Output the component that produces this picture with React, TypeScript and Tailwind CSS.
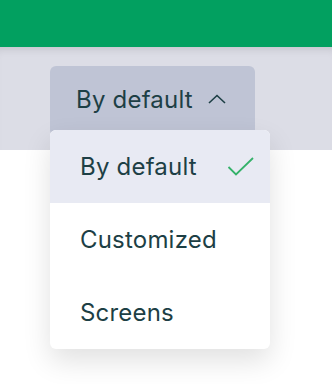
import React from 'react'

const options = ['By default', 'Customized', 'Screens']

const App: React.FC = () => {
  const selected = 'By default'
  return (
    <div className="w-[332px] h-[384px] bg-white overflow-hidden" style={{ fontFamily: 'Inter, "Noto Sans", sans-serif' }}>
      <div className="h-[47px] bg-[#02a060]" />
      <div className="relative h-[103px] bg-[#dcdde6] shadow-[inset_0_8px_8px_-6px_rgba(0,0,0,0.12)]">
        <div className="absolute left-[50px] top-[19px] w-[205px] h-[70px] rounded-md bg-[#bfc4d5] flex items-start pt-[18px] pl-[26px] gap-[15px] text-[#1d3f45]">
          <span className="text-[24px] leading-[32px] tracking-[0.2px]">By default</span>
          <svg width="18" height="10" viewBox="0 0 18 10" className="mt-[10px]" fill="none" stroke="#1d3f45" strokeWidth="1.6">
            <path d="M1 9 L9 1.5 L17 9" />
          </svg>
        </div>
        <div className="absolute left-[50px] top-[83px] w-[220px] rounded-md bg-white overflow-hidden shadow-[0_12px_28px_rgba(0,0,0,0.12)] z-10">
          {options.map(opt => (
            <div
              key={opt}
              className={`h-[73px] flex items-center justify-between pl-[30px] pr-[15px] text-[24px] tracking-[0.2px] text-[#1d3f45] ${opt === selected ? 'bg-[#e8eaf3]' : ''}`}
            >
              <span>{opt}</span>
              {opt === selected && (
                <svg width="28" height="22" viewBox="0 0 28 22" fill="none" stroke="#35b26a" strokeWidth="1.8">
                  <path d="M1.5 11 L9 18.5 L26 2" />
                </svg>
              )}
            </div>
          ))}
        </div>
      </div>
    </div>
  )
}

export default App
